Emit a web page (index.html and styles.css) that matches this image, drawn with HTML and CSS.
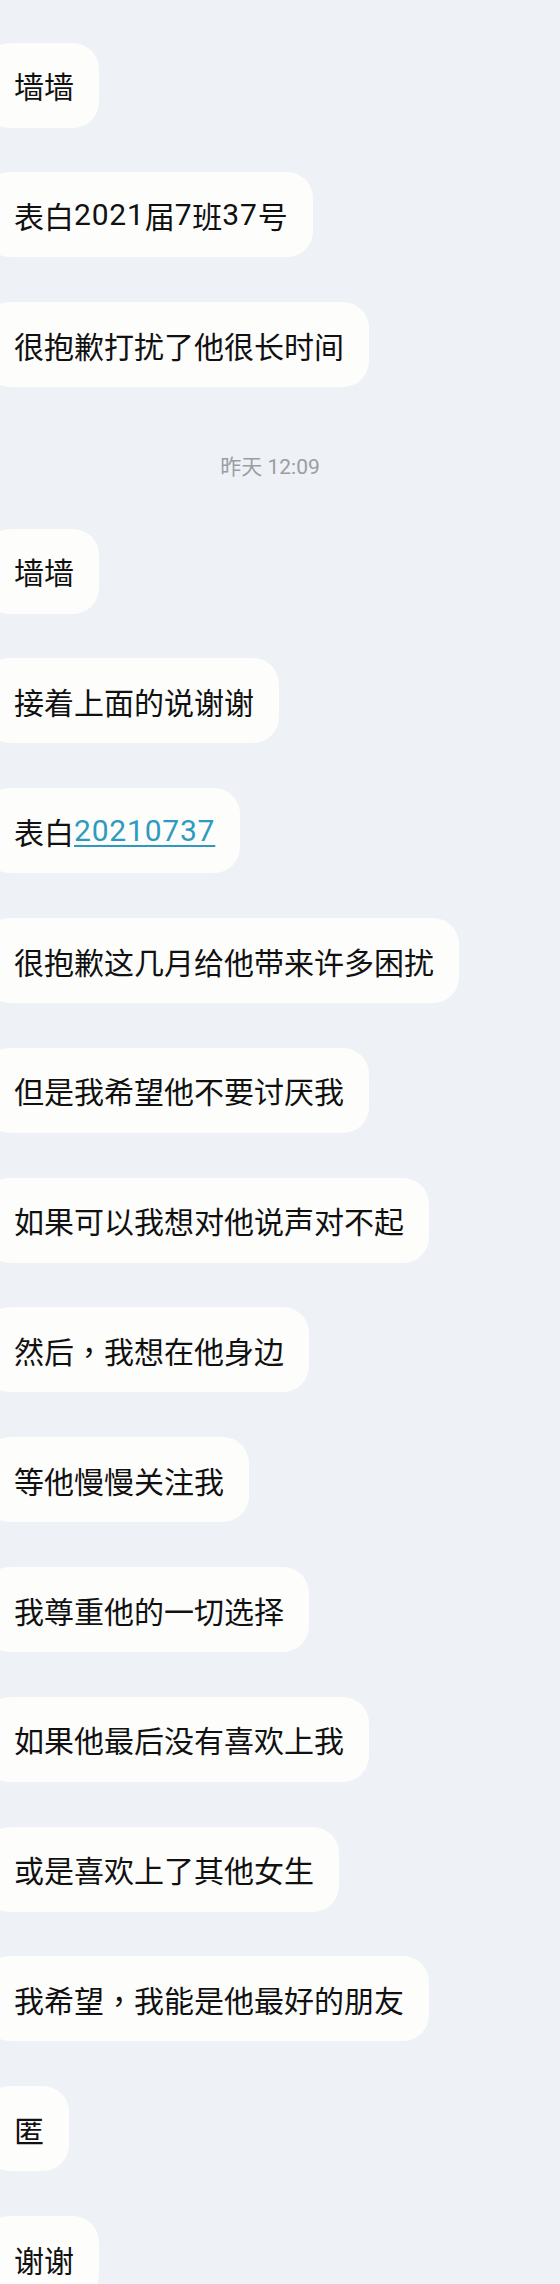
FILE: index.html
```html
<!DOCTYPE html>
<html lang="zh-CN">
<head>
<meta charset="utf-8">
<title>聊天记录</title>
<link rel="stylesheet" href="styles.css">
</head>
<body>
<div class="chat">
  <div class="bubble">墙墙</div>
  <div class="bubble">表白<span class="num">2021</span>届<span class="num">7</span>班<span class="num">37</span>号</div>
  <div class="bubble">很抱歉打扰了他很长时间</div>
  <div class="time">昨天 12:09</div>
  <div class="bubble">墙墙</div>
  <div class="bubble">接着上面的说谢谢</div>
  <div class="bubble">表白<span class="link num">20210737</span></div>
  <div class="bubble">很抱歉这几月给他带来许多困扰</div>
  <div class="bubble">但是我希望他不要讨厌我</div>
  <div class="bubble">如果可以我想对他说声对不起</div>
  <div class="bubble">然后<span class="punct">，</span>我想在他身边</div>
  <div class="bubble">等他慢慢关注我</div>
  <div class="bubble">我尊重他的一切选择</div>
  <div class="bubble">如果他最后没有喜欢上我</div>
  <div class="bubble">或是喜欢上了其他女生</div>
  <div class="bubble">我希望<span class="punct">，</span>我能是他最好的朋友</div>
  <div class="bubble">匿</div>
  <div class="bubble">谢谢</div>
</div>
</body>
</html>
```

FILE: styles.css
```css
html, body {
  margin: 0;
  padding: 0;
  background: #eef1f6;
  overflow: hidden;
}

body {
  width: 560px;
  height: 2284px;
  font-family: Roboto, "Noto Sans CJK SC", sans-serif;
}

.chat {
  display: flex;
  flex-direction: column;
  align-items: flex-start;
  gap: 44.8px;
  padding-top: 42.5px;
}

.bubble {
  box-sizing: border-box;
  height: 85px;
  margin-left: -16px;
  padding: 0 25px 0 30px;
  display: flex;
  align-items: center;
  background: #fdfdfc;
  border-radius: 26px;
  font-size: 30px;
  color: #111111;
  white-space: nowrap;
}

.num {
  letter-spacing: 0.8px;
}

.punct {
  font-family: "Noto Sans CJK TC", sans-serif;
}

.link {
  color: #2e9ac0;
  text-decoration: underline;
  text-decoration-thickness: 2px;
  text-underline-offset: 4px;
}

.time {
  align-self: stretch;
  box-sizing: border-box;
  height: 52px;
  padding: 20px 20px 2px 0;
  line-height: 30px;
  text-align: center;
  font-size: 21px;
  color: #9b9da1;
}
```
